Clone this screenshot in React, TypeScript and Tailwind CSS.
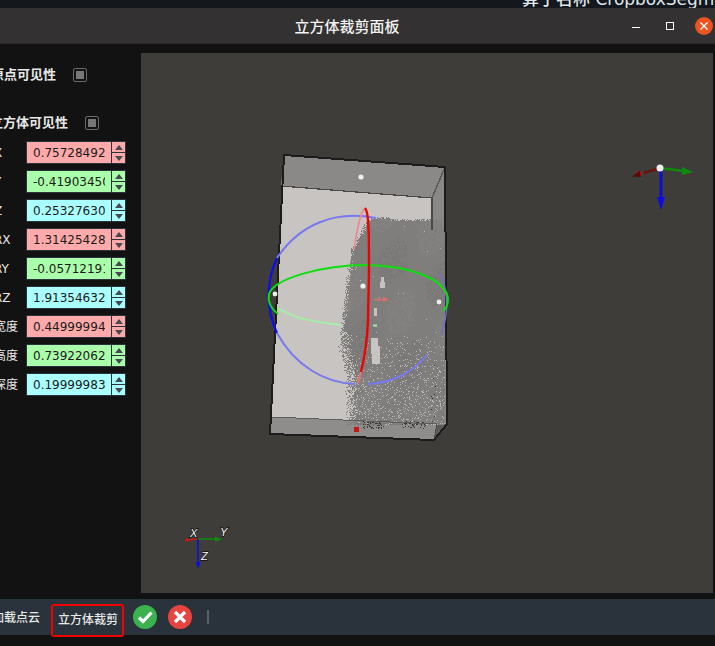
import { useMemo } from 'react';

const fields = [
    { label: 'X', value: '0.75728492', bg: 'bg-[#ffaaaa]' },
    { label: 'Y', value: '-0.41903450', bg: 'bg-[#aaffaa]' },
    { label: 'Z', value: '0.25327630', bg: 'bg-[#aaffff]' },
    { label: 'RX', value: '1.31425428', bg: 'bg-[#ffaaaa]' },
    { label: 'RY', value: '-0.05712191', bg: 'bg-[#aaffaa]' },
    { label: 'RZ', value: '1.91354632', bg: 'bg-[#aaffff]' },
    { label: '宽度', value: '0.44999994', bg: 'bg-[#ffaaaa]' },
    { label: '高度', value: '0.73922062', bg: 'bg-[#aaffaa]' },
    { label: '深度', value: '0.19999983', bg: 'bg-[#aaffff]' },
];

function rng(seed: number) {
    let s = seed;
    return () => {
        s = (s * 16807) % 2147483647;
        return s / 2147483647;
    };
}

function cloudLeft(y: number) {
    if (y < 250) return 352 + (250 - y) * 0.55;
    if (y < 345) return 352 - (y - 250) * 0.13;
    return 340 + Math.min(y - 345, 30) * 0.25;
}

function PointCloud() {
    const { body, pale, deep, light, dark } = useMemo(() => {
        const r = rng(4711);
        let body = '';
        let pale = '';
        let deep = '';
        let light = '';
        let dark = '';
        for (let y = 216; y < 425; y += 1) {
            for (let x = 332; x < 445; x += 1) {
                const left = cloudLeft(y) + r() * 6 - 3;
                const top = 216 + (x > 390 ? 2 : 0) + r() * 3;
                if (x < left || y < top) continue;
                if (x > 441 && y < 228) continue;
                if (x - left < 8 && y > 330 && r() < 0.4) continue;
                const n = r();
                const band = Math.sin(x / 9 + y / 23) + Math.sin(y / 15 - x / 31);
                if (band > 0.8 && n < 0.5) pale += `M${x} ${y}h1v1h-1z`;
                else if (band < -0.8 && n < 0.5) deep += `M${x} ${y}h1v1h-1z`;
                else body += `M${x} ${y}h1v1h-1z`;
                const density = y > 335 ? 0.03 + (y - 335) * 0.0012 : 0.002;
                if (r() < density && x > 345) light += `M${x} ${y}h1v1h-1z`;
                if (y > 340 && x > 430 && x < 436 && r() < 0.02) dark += `M${x} ${y}h1v1h-1z`;
            }
        }
        for (let i = 0; i < 150; i += 1) {
            const x = 362 + r() * 64;
            const y = 421 + r() * 7;
            if (x > 383 && x < 402) continue;
            dark += `M${x.toFixed(0)} ${y.toFixed(0)}h1v1h-1z`;
        }
        return { body, pale, deep, light, dark };
    }, []);
    return (
        <g shapeRendering="crispEdges">
            <path d={body} fill="#807e7c" />
            <path d={pale} fill="#858381" />
            <path d={deep} fill="#7a7876" />
            <path d={light} fill="#b8b5b3" />
            <path d={dark} fill="#383634" />
        </g>
    );
}

function Viewport() {
    return (
        <svg viewBox="141 53 572 540" className="block w-full h-full">
            <rect x="141" y="53" width="572" height="540" fill="#3f3d39" />

            {/* box walls */}
            <polygon points="284,155 445,167 447,424 434,440 270,434" fill="#c8c4c2" />
            <polygon points="284,155 445,167 432,198 281,186" fill="#8b8987" />
            <polygon points="432,198 445,167 447,424 437,424" fill="#8a8886" />
            <polygon points="272,417 437,424 434,440 270,434" fill="#8f8d8b" />
            <polygon points="437,424 447,424 434,440" fill="#5c5a58" />

            <PointCloud />

            {/* light cuts in the cloud */}
            <g shapeRendering="crispEdges" fill="#c8c4c2">
                <path d="M371 338h7v8h2v18h-8v-10h-1z" />
                <path d="M374 308h3v8h-3z" />
                <path d="M381 277h3v5h1v6h-5v-6h1z" />
            </g>

            {/* box lines */}
            <g shapeRendering="crispEdges">
                <polyline points="281,186 432,198 432,230" fill="none" stroke="#4a4846" strokeWidth="1.2" />
                <line x1="432" y1="198" x2="445" y2="167" stroke="#5a5856" strokeWidth="1.5" />
                <line x1="272" y1="417" x2="437" y2="424" stroke="#5f5d5b" strokeWidth="1" />
                <line x1="437" y1="424" x2="434" y2="440" stroke="#4a4846" strokeWidth="1" />
                <polygon points="284,155 445,167 447,424 434,440 270,434" fill="none" stroke="#1c1c1c" strokeWidth="2" />
            </g>

            {/* blue ring */}
            <path d="M277 258A88 88 0 0 0 277 333" fill="none" stroke="#0c0cf0" strokeWidth="2.2" />
            <path d="M277 258C300 224 335 210 376 218" fill="none" stroke="#7878f0" strokeWidth="2" />
            <path d="M277 333C295 366 325 383 355 384" fill="none" stroke="#7878f0" strokeWidth="2" />
            <path d="M368 384C392 383 414 372 427 355" fill="none" stroke="#7878f0" strokeWidth="2" />
            <path d="M441 274A88 88 0 0 1 441 335" fill="none" stroke="#6f6fc8" strokeWidth="1.5" />

            {/* green ring */}
            <path d="M278 314C270 308 268 300 269 294C274 279 320 265 368 265C410 266 445 279 448 298C448 304 446 309 443 311" fill="none" stroke="#0ce00c" strokeWidth="2" />
            <path d="M278 308C295 320 320 322 340 325M373 325.500h4" fill="none" stroke="#a6eda6" strokeWidth="2" />

            {/* red ring */}
            <path d="M354 250C357 230 360 212 365 208" fill="none" stroke="#f08a8a" strokeWidth="1.6" />
            <path d="M365 208C369 212 369 235 369 270L368 320C367 345 364 360 361 372" fill="none" stroke="#f00000" strokeWidth="2.4" />
            <path d="M361 372L358 383" fill="none" stroke="#f07070" strokeWidth="2" />
            <path d="M374 298.500L383 299V296.500L389 299.500L383 302V300.500H374Z" fill="#d97070" />

            {/* handles */}
            <circle cx="361" cy="177" r="2.600" fill="#eeeeee" />
            <circle cx="363" cy="286" r="2.600" fill="#eeeeee" />
            <circle cx="439" cy="302" r="2.400" fill="#eeeeee" />
            <circle cx="275" cy="294" r="2.400" fill="#eeeeee" />
            <rect x="354" y="427" width="5" height="5" fill="#c81414" />

            {/* gizmo, top right */}
            <line x1="660" y1="168" x2="644" y2="173" stroke="#6e1010" strokeWidth="2.5" />
            <circle cx="639" cy="174" r="3" fill="#c81818" />
            <path d="M640 170.500L632 176.500L641 177Z" fill="#5a0808" />
            <line x1="660" y1="168" x2="684" y2="171" stroke="#0d8c0d" strokeWidth="2.5" />
            <path d="M682 167L693 172L682 175Z" fill="#0d8c0d" />
            <line x1="661" y1="168" x2="661" y2="200" stroke="#0c0ce0" strokeWidth="2.8" />
            <path d="M657 197H665L661 210Z" fill="#0c0ce0" />
            <circle cx="660" cy="168" r="3.500" fill="#eeeeee" />

            {/* world axes, bottom left */}
            <line x1="198" y1="539" x2="188" y2="540" stroke="#c81818" strokeWidth="1.5" />
            <circle cx="187" cy="540" r="1.800" fill="#c81818" />
            <line x1="198" y1="539" x2="216" y2="539" stroke="#0d8c0d" strokeWidth="1.5" />
            <path d="M215 536.500L222 539.500L215 541.500Z" fill="#0d8c0d" />
            <line x1="198" y1="539" x2="198" y2="563" stroke="#0c0ce0" strokeWidth="1.5" />
            <path d="M196 562H200.500L198 569Z" fill="#0c0ce0" />
            <g
                fontFamily="'Liberation Sans', sans-serif"
                fontSize="11"
                fontStyle="italic"
                fill="#ffffff"
                stroke="#111111"
                strokeWidth="1.400"
                paintOrder="stroke"
            >
                <text x="190" y="537">X</text>
                <text x="220" y="536">Y</text>
                <text x="201" y="560">Z</text>
            </g>
        </svg>
    );
}

function Check() {
    return (
        <span className="flex w-[14px] h-[14px] items-center justify-center rounded-[2px] border border-[#6a6a6a]">
            <span className="w-[8px] h-[8px] bg-[#777777]" />
        </span>
    );
}

function Spin({ bg }: { bg: string }) {
    return (
        <div className={`flex flex-col w-[14px] h-[23px] border border-[#2a333b] border-l-0 ${bg}`}>
            <div className="flex-1 flex items-center justify-center border-b border-[#2a333b]">
                <svg width="8" height="5" viewBox="0 0 8 5"><path d="M4 0L8 5H0Z" fill="#444a50" /></svg>
            </div>
            <div className="flex-1 flex items-center justify-center">
                <svg width="8" height="5" viewBox="0 0 8 5"><path d="M0 0H8L4 5Z" fill="#444a50" /></svg>
            </div>
        </div>
    );
}

function LeftPanel() {
    return (
        <div className="w-[141px] shrink-0 font-['DejaVu_Sans','Noto_Sans_CJK_SC',sans-serif] text-[#e8e8e8]">
            <div className="flex items-center h-[14px] mt-[15px] -ml-[9px] gap-[17px] text-[13px] font-bold">
                <span className="-mt-[1px] leading-none">原点可见性</span>
                <Check />
            </div>
            <div className="flex items-center h-[14px] mt-[34px] -ml-[10px] gap-[17px] text-[13px] font-bold">
                <span className="-mt-[1px] leading-none">立方体可见性</span>
                <Check />
            </div>
            <div className="flex flex-col gap-[6px] mt-[11px]">
                {fields.map((f) => (
                    <div key={f.label} className="flex items-center h-[23px]">
                        <span className="w-[32px] -ml-[6px] text-[12px] leading-none">{f.label}</span>
                        <div className={`w-[86px] h-[23px] pl-[6px] pr-[6px] border border-[#2a333b] flex items-center ${f.bg}`}>
                            <span className="block overflow-hidden whitespace-nowrap text-[12px] leading-none text-[#1a1a1a] font-['DejaVu_Sans',sans-serif]">
                                {f.value}
                            </span>
                        </div>
                        <Spin bg={f.bg} />
                    </div>
                ))}
            </div>
        </div>
    );
}

function Toolbar() {
    return (
        <div className="flex items-center h-[36px] mt-[6px] bg-[#2a333b] font-['Noto_Sans_CJK_SC','Noto_Sans',sans-serif] text-[12px] text-[#e8e8e8]">
            <span className="-ml-[8px] w-[59px] -mt-[1px] font-medium">加载点云</span>
            <div className="flex items-center justify-center w-[73px] h-[33px] mt-[6px] pl-[1px] pb-[3px] border-[2.5px] border-[#f00000] rounded-[3px] font-medium">
                立方体裁剪
            </div>
            <svg width="26" height="26" viewBox="0 0 26 26" className="ml-[8px]">
                <circle cx="13" cy="13" r="12" fill="#3cb24f" />
                <path d="M7 13.500L11 17.500L19.500 8.500" fill="none" stroke="#ffffff" strokeWidth="3.2" />
            </svg>
            <svg width="26" height="26" viewBox="0 0 26 26" className="ml-[9px]">
                <circle cx="13" cy="13" r="12" fill="#e8433f" />
                <path d="M8 8L18 18M18 8L8 18" fill="none" stroke="#ffffff" strokeWidth="3.2" />
            </svg>
            <span className="w-[2px] h-[14px] ml-[14px] bg-[#59626a]" />
        </div>
    );
}

export default function App() {
    return (
        <div className="w-[715px] h-[646px] overflow-hidden flex flex-col bg-[#121212]">
            <div className="h-[8px] shrink-0 overflow-hidden bg-[#14181c] flex">
                <div className="ml-[522px] -mt-[11px] whitespace-nowrap text-[17px] leading-[20px] text-[#dfe6ee] font-medium font-['DejaVu_Sans','Noto_Sans_CJK_SC',sans-serif]">
                    算子名称 CropboxSegm
                </div>
            </div>

            <div className="relative h-[36px] shrink-0 flex items-center justify-center bg-[#333131] border-b border-[#2a2828]">
                <span className="text-[15px] mt-[1px] font-medium text-[#f2f2f2] ml-[-21px] font-['Noto_Sans_CJK_SC','Noto_Sans',sans-serif]">立方体裁剪面板</span>
                <span className="absolute left-[632px] top-[19px] w-[8px] h-[1px] bg-white" />
                <span className="absolute left-[666px] top-[14px] w-[8px] h-[8px] border border-white" />
                <svg width="18" height="18" viewBox="0 0 18 18" className="absolute left-[695px] top-[9px]">
                    <circle cx="9" cy="9" r="9" fill="#e95420" />
                    <path d="M5.500 5.500L12.500 12.500M12.500 5.500L5.500 12.500" stroke="#ffffff" strokeWidth="1.4" />
                </svg>
            </div>

            <div className="flex h-[549px] shrink-0 pt-[9px] pr-[2px]">
                <LeftPanel />
                <div className="flex-1 h-[540px]">
                    <Viewport />
                </div>
            </div>

            <Toolbar />
        </div>
    );
}
